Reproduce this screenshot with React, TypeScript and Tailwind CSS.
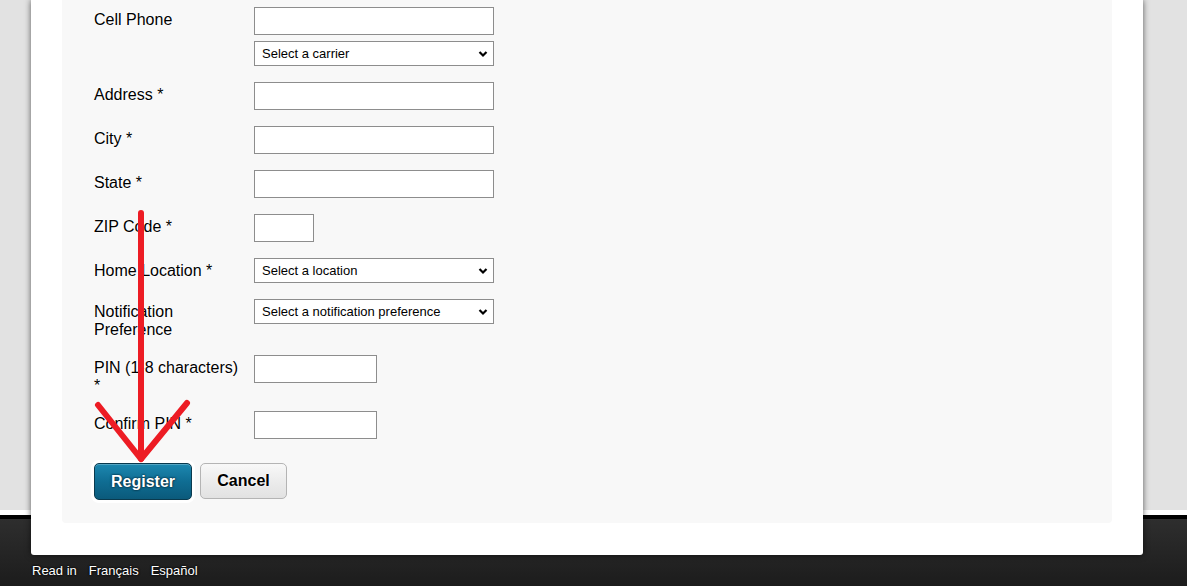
import React from 'react';

const labelCls =
  'w-[150px] shrink-0 pt-[4px] text-[16px] leading-[18px] text-black [text-shadow:0_0_2px_#fff,0_0_2px_#fff,0_0_3px_#fff]';
const inputCls = 'block h-[28px] border border-[#8d8d8d] bg-white';

function Select({ text }: { text: string }) {
  return (
    <div className="relative flex h-[25px] w-[240px] items-center border border-[#8d8d8d] bg-white pl-[7px] text-[13px] text-black">
      <span>{text}</span>
      <svg className="absolute right-[5px] top-[8px]" width="10" height="8" viewBox="0 0 10 8">
        <path d="M1.5 2 L5 5.5 L8.5 2" fill="none" stroke="#000" strokeWidth="2.2" />
      </svg>
    </div>
  );
}

function Row({ label, children, mb = 'mb-[16px]' }: { label: React.ReactNode; children: React.ReactNode; mb?: string }) {
  return (
    <div className={`flex gap-[10px] ${mb}`}>
      <div className={labelCls}>{label}</div>
      <div>{children}</div>
    </div>
  );
}

export default function App() {
  return (
    <div
      className="relative h-[586px] w-[1187px] overflow-hidden bg-[linear-gradient(to_bottom,#e2e2e2_0,#e2e2e2_510px,#fff_510px,#fff_515px,#000_515px,#000_519px,#2e2e2e_519px,#1c1c1c_100%)]"
      style={{ fontFamily: '"Liberation Sans", Arial, sans-serif' }}
    >
      <div className="ml-[31px] w-[1112px] rounded-b-[3px] bg-white pb-[32px] shadow-[0_0_6px_rgba(0,0,0,0.6)]">
        <div className="ml-[31px] w-[1050px] rounded-b-[4px] bg-[#f8f8f8] pl-[32px] pt-[7px] pb-[23px]">
          <Row label="Cell Phone">
            <div className={`${inputCls} w-[240px]`} />
            <div className="mt-[6px]">
              <Select text="Select a carrier" />
            </div>
          </Row>
          <Row label="Address *">
            <div className={`${inputCls} w-[240px]`} />
          </Row>
          <Row label="City *">
            <div className={`${inputCls} w-[240px]`} />
          </Row>
          <Row label="State *">
            <div className={`${inputCls} w-[240px]`} />
          </Row>
          <Row label="ZIP Code *">
            <div className={`${inputCls} w-[60px]`} />
          </Row>
          <Row label="Home Location *">
            <Select text="Select a location" />
          </Row>
          <Row label="Notification Preference" mb="mb-[16px]">
            <Select text="Select a notification preference" />
          </Row>
          <Row label="PIN (1-8 characters) *" mb="mb-[16px]">
            <div className={`${inputCls} w-[123px]`} />
          </Row>
          <Row label="Confirm PIN *" mb="mb-[24px]">
            <div className={`${inputCls} w-[123px]`} />
          </Row>
          <div className="flex items-start gap-[8px]">
            <button className="h-[37px] w-[98px] rounded-[5px] border border-[#0a3a4e] bg-[linear-gradient(to_bottom,#1d88b0,#0f6d93_50%,#0b5a7b)] text-[16px] font-bold text-white shadow-[0_0_0_3px_#fff,inset_0_1px_0_rgba(255,255,255,0.25)] [text-shadow:0_0_2px_#06283a,0_0_2px_#06283a]">
              Register
            </button>
            <button className="h-[36px] w-[87px] rounded-[5px] border border-[#b4b4b4] bg-[linear-gradient(to_bottom,#f8f8f8,#ececec_50%,#e2e2e2)] text-[16px] font-bold text-black [text-shadow:0_0_2px_#fff,0_0_2px_#fff]">
              Cancel
            </button>
          </div>
        </div>
      </div>
      <div className="ml-[32px] mt-[7px] flex gap-[12px] text-[13px] leading-[18px] text-white [text-shadow:0_0_2px_#000,0_0_2px_#000]">
        <span>Read in</span>
        <span>Français</span>
        <span>Español</span>
      </div>
      <svg className="pointer-events-none absolute left-0 top-0" width="1187" height="586">
        <g stroke="#ed1c24" strokeWidth="6" strokeLinecap="round" fill="none">
          <line x1="141" y1="213" x2="141" y2="458" />
          <line x1="98" y1="405" x2="141" y2="459" />
          <line x1="187" y1="403" x2="141" y2="459" />
        </g>
      </svg>
    </div>
  );
}
